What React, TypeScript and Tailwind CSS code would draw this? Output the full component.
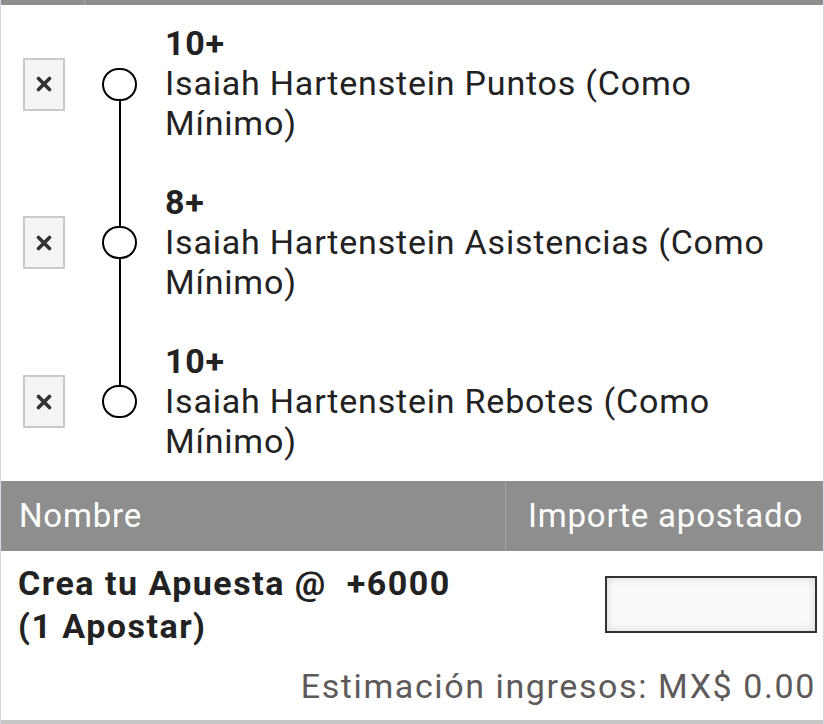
import React from "react"

type Leg = {
  line: string
  market: string
}

const legs: Leg[] = [
  { line: "10+", market: "Isaiah Hartenstein Puntos (Como Mínimo)" },
  { line: "8+", market: "Isaiah Hartenstein Asistencias (Como Mínimo)" },
  { line: "10+", market: "Isaiah Hartenstein Rebotes (Como Mínimo)" },
]

function RemoveBox() {
  return (
    <div className="w-[42px] h-[53px] border-2 border-[#cacaca] bg-[#f4f4f4] flex items-center justify-center">
      <svg width="16" height="16" viewBox="0 0 16 16" className="blur-[0.5px]">
        <path d="M2.5 2.5 L13.5 13.5 M13.5 2.5 L2.5 13.5" stroke="#333" strokeWidth="3.6" strokeLinecap="round" />
      </svg>
    </div>
  )
}

export default function App() {
  return (
    <div
      className="w-[824px] h-[724px] bg-white border-l border-r border-[#d5d9e2] flex flex-col overflow-hidden text-[#222]"
      style={{ fontFamily: "Roboto, 'Noto Sans', sans-serif" }}
    >
      {/* top strip */}
      <div className="h-[5px] flex shrink-0">
        <div className="w-[84px] bg-[#8e8e8e] border-r border-[#a9a9a9]" />
        <div className="flex-1 bg-[#8e8e8e]" />
      </div>

      {/* legs */}
      <div className="flex flex-col shrink-0">
        {legs.map((leg, i) => (
          <div key={i} className="flex items-stretch">
            <div className="w-[101px] shrink-0 pl-[22px] flex items-center">
              <RemoveBox />
            </div>
            <div className="w-[35px] shrink-0 flex flex-col items-center">
              <div className={`w-[2px] flex-1 ${i === 0 ? "" : "bg-black"}`} />
              <div className="w-[35px] h-[33px] rounded-full border-2 border-black shrink-0" />
              <div className={`w-[2px] flex-1 ${i === legs.length - 1 ? "" : "bg-black"}`} />
            </div>
            <div
              className={`w-[655px] pl-[28px] text-[34px] leading-[40px] tracking-[0.8px] pb-[20px] ${
                i === 0 ? "pt-[18px]" : "pt-[19px]"
              }`}
            >
              <div className="font-bold">{leg.line}</div>
              <div>{leg.market}</div>
            </div>
          </div>
        ))}
      </div>

      {/* table header */}
      <div className="h-[70px] flex bg-[#8e8e8e] text-white text-[33px] tracking-[0.8px] shrink-0">
        <div className="w-[505px] pl-[18px] flex items-center border-r border-[#a3a3a3]">Nombre</div>
        <div className="flex-1 pr-[20px] flex items-center justify-end">Importe apostado</div>
      </div>

      {/* bet row */}
      <div className="flex items-start pt-[11px] shrink-0">
        <div className="w-[560px] pl-[17px] text-[34px] leading-[43px] tracking-[1.5px] font-bold">
          <span className="whitespace-pre">Crea tu Apuesta @  +6000</span>
          <br />
          (1 Apostar)
        </div>
        <div className="flex-1 flex justify-end pr-[6px] pt-[14px]">
          <div className="w-[212px] h-[57px] border-2 border-[#333] bg-[#fafafa] shadow-[inset_0_0_10px_rgba(0,0,0,0.14)]" />
        </div>
      </div>

      <div className="pr-[7px] mt-[18px] text-right text-[34px] leading-[40px] tracking-[1.6px] text-[#5e5a5a] shrink-0">
        Estimación ingresos: MX$ 0.00
      </div>

      <div className="mt-[14px] h-[5px] bg-[#c6c6c6] shrink-0" />
    </div>
  )
}
